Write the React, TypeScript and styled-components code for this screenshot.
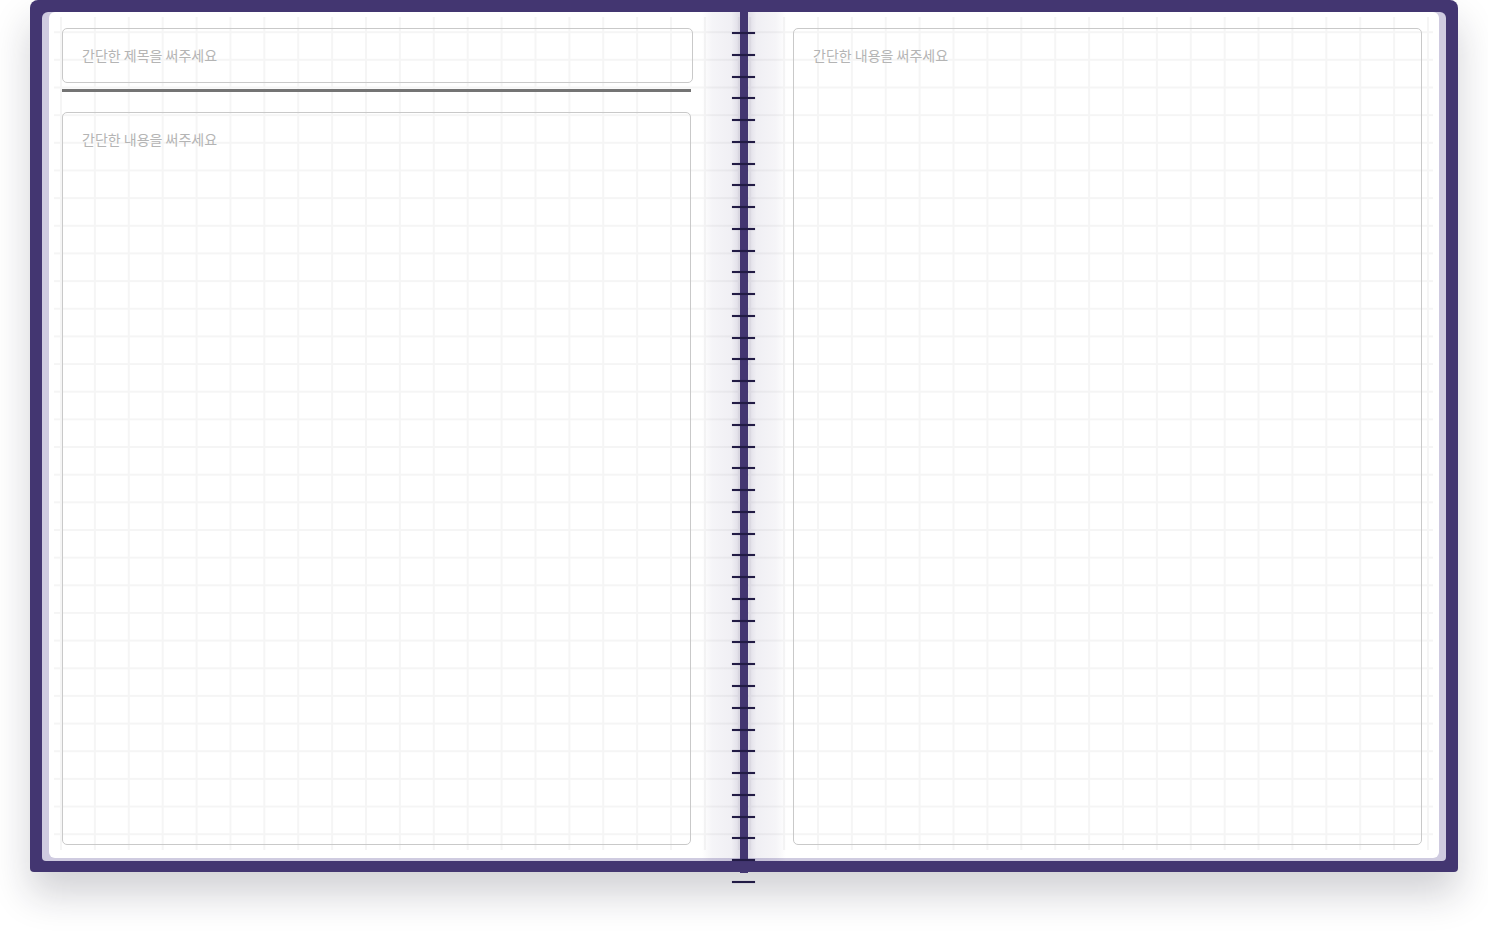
import React from "react";
import styled, { createGlobalStyle } from "styled-components";

const GlobalStyle = createGlobalStyle`
  html, body { margin: 0; padding: 0; background: #ffffff; }
  body { font-family: "Noto Sans CJK KR", "Noto Sans", sans-serif; }
  * { box-sizing: border-box; }
`;

const Stage = styled.div`
  padding: 0 30px;
  height: 937px;
  overflow: hidden;
`;

const Cover = styled.div`
  height: 872px;
  background: #433671;
  border-radius: 8px 8px 4px 4px;
  padding: 12px 12px 7px;
  box-shadow: 0 22px 38px rgba(25, 25, 45, 0.2);
`;

const Stack = styled.div`
  height: 849px;
  margin-top: 4px;
  padding: 0 7px 7px;
  background: #cfcbe0;
  border-radius: 6px 6px 4px 4px;
`;

const Paper = styled.div`
  height: 846px;
  margin-top: -4px;
  background: #ffffff;
  border-radius: 6px;
  display: grid;
  grid-template-columns: 1fr 8px 1fr;
`;

const Page = styled.section<{ $side: "left" | "right" }>`
  display: flex;
  padding: ${(p) => (p.$side === "left" ? "5px 0 8px 5px" : "5px 6px 8px 0")};
`;

const GridArea = styled.div<{ $side: "left" | "right" }>`
  flex: 1;
  display: flex;
  flex-direction: column;
  padding: ${(p) => (p.$side === "left" ? "11px 49px 5px 8px" : "11px 11px 5px 45px")};
  background-image:
    linear-gradient(90deg, #f5f5f5 0, #f5f5f5 2px, transparent 2px),
    linear-gradient(180deg, #f5f5f5 0, #f5f5f5 2px, transparent 2px);
  background-size: 33.9px 100%, 100% 27.66px;
  background-position: ${(p) => (p.$side === "left" ? "6px 0" : "1.2px 0")}, 0 14.2px;
`;

const fieldBase = `
  border: 1px solid #c9c9c9;
  border-radius: 5px;
  background: transparent;
  font-family: "Noto Sans CJK KR", "Noto Sans", sans-serif;
  font-size: 14px;
  color: #333333;
  outline: none;
  &::placeholder { color: #b4b4b4; }
`;

const TitleInput = styled.input`
  ${fieldBase}
  height: 55px;
  width: calc(100% + 2px);
  padding: 0 19px 2px;
`;

const Divider = styled.hr`
  margin: 6px 0 0;
  border: 0;
  height: 3px;
  background: #747474;
`;

const Body = styled.textarea<{ $gap: number }>`
  ${fieldBase}
  flex: 1;
  margin-top: ${(p) => p.$gap}px;
  padding: 16px 19px;
  resize: none;
  line-height: 20px;
`;

const Spine = styled.div`
  position: relative;
  margin-bottom: -15px;
`;

const SpineShadow = styled.div`
  position: absolute;
  top: 0;
  left: -38px;
  width: 84px;
  height: 853px;
  background: linear-gradient(
    90deg,
    rgba(67, 54, 113, 0) 0%,
    rgba(67, 54, 113, 0.05) 12%,
    rgba(67, 54, 113, 0.08) 35%,
    rgba(67, 54, 113, 0.2) 48%,
    rgba(67, 54, 113, 0.2) 52%,
    rgba(67, 54, 113, 0.08) 65%,
    rgba(67, 54, 113, 0.05) 88%,
    rgba(67, 54, 113, 0) 100%
  );
`;

const SpineBar = styled.div`
  position: absolute;
  inset: 0;
  background: #433671;
`;

const Rings = styled.div`
  position: absolute;
  top: 20px;
  left: -8px;
  width: 23px;
  height: 851px;
  display: flex;
  flex-direction: column;
  justify-content: space-between;
`;

const Ring = styled.span`
  display: block;
  height: 2px;
  background: #221b45;
  box-shadow: 0 0 1px rgba(34, 27, 69, 0.5);
`;

export default function App() {
  const rings = Array.from({ length: 40 }, (_, i) => i);
  return (
    <>
      <GlobalStyle />
      <Stage>
        <Cover>
          <Stack>
            <Paper>
              <Page $side="left">
                <GridArea $side="left">
                  <TitleInput placeholder="간단한 제목을 써주세요" />
                  <Divider />
                  <Body $gap={20} placeholder="간단한 내용을 써주세요" />
                </GridArea>
              </Page>
              <Spine>
                <SpineShadow />
                <SpineBar />
                <Rings>
                  {rings.map((i) => (
                    <Ring key={i} />
                  ))}
                </Rings>
              </Spine>
              <Page $side="right">
                <GridArea $side="right">
                  <Body $gap={0} placeholder="간단한 내용을 써주세요" />
                </GridArea>
              </Page>
            </Paper>
          </Stack>
        </Cover>
      </Stage>
    </>
  );
}
